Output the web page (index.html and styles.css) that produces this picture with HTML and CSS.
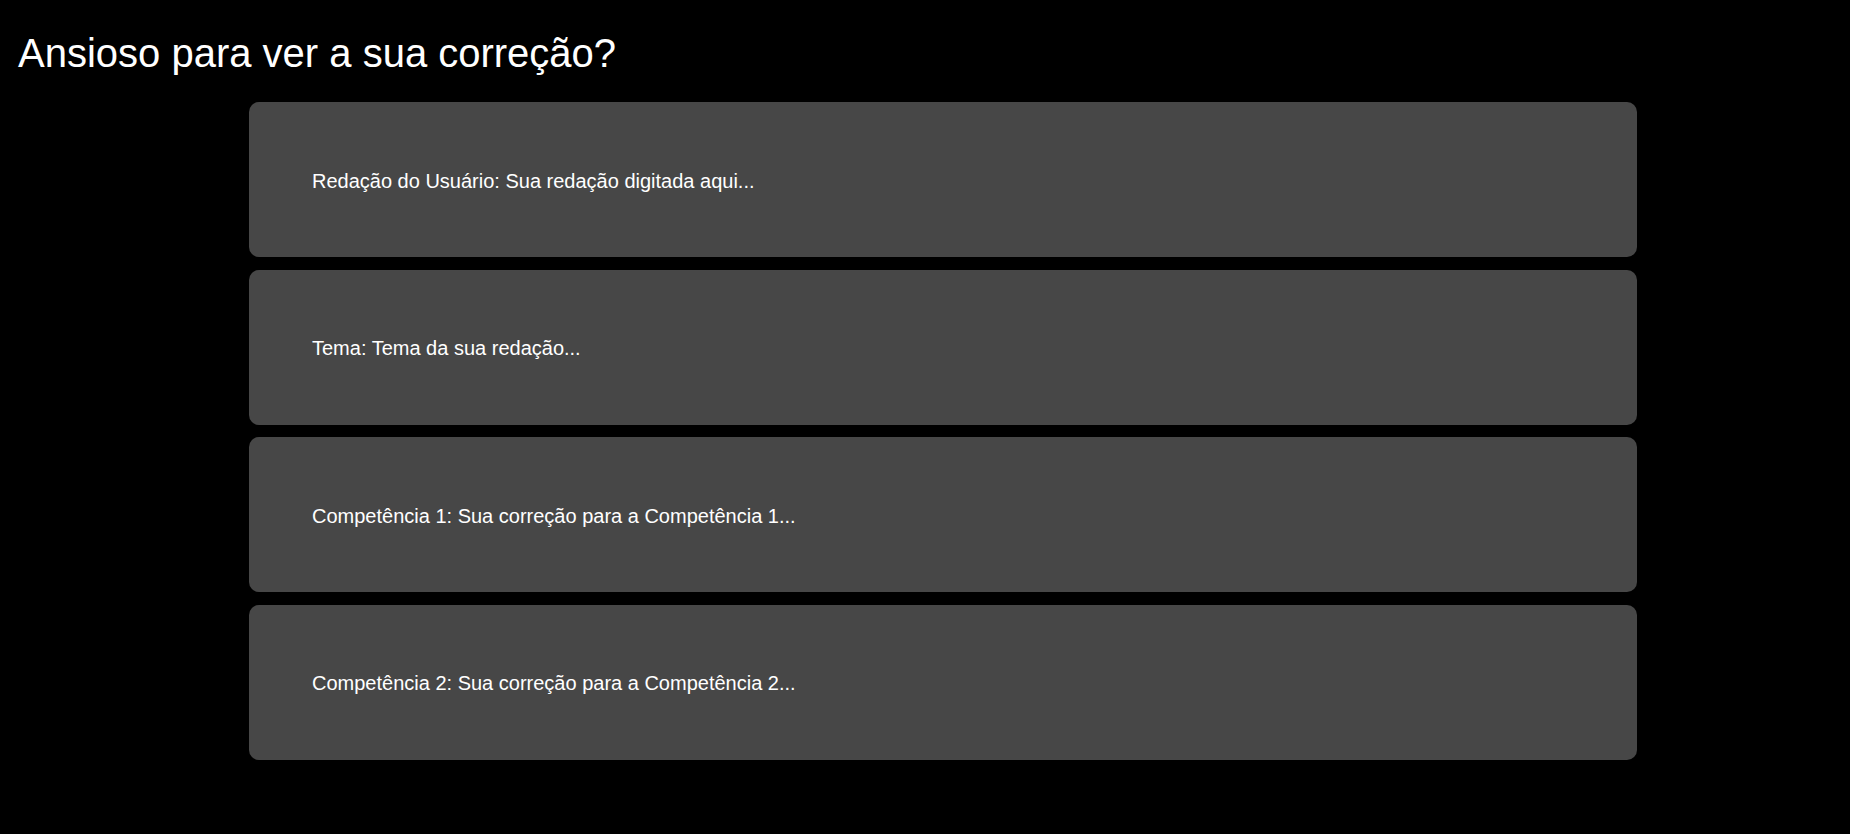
FILE: index.html
```html
<!DOCTYPE html>
<html lang="pt">
<head>
<meta charset="utf-8">
<title>Correção</title>
<link rel="stylesheet" href="styles.css">
</head>
<body>
<h1 class="title">Ansioso para ver a sua correção?</h1>
<main class="cards">
  <section class="card"><p class="card-text">Redação do Usuário: Sua redação digitada aqui...</p></section>
  <section class="card"><p class="card-text">Tema: Tema da sua redação...</p></section>
  <section class="card"><p class="card-text">Competência 1: Sua correção para a Competência 1...</p></section>
  <section class="card"><p class="card-text">Competência 2: Sua correção para a Competência 2...</p></section>
</main>
</body>
</html>
```
FILE: styles.css
```css
html, body {
  margin: 0;
  padding: 0;
  background: #000;
  color: #fff;
  font-family: "Liberation Sans", Arial, sans-serif;
}
body {
  min-height: 834px;
}
.title {
  margin: 0;
  padding: 30px 0 0 18px;
  font-size: 40px;
  font-weight: normal;
  line-height: 46px;
}
.cards {
  display: flex;
  flex-direction: column;
  gap: 12.67px;
  width: 1388px;
  margin: 26px 0 0 249px;
}
.card {
  height: 155px;
  box-sizing: border-box;
  background: #474747;
  border-radius: 10px;
  padding: 2px 63px 0;
  display: flex;
  align-items: center;
}
.card-text {
  margin: 0;
  font-size: 20px;
  line-height: 22px;
}
```
